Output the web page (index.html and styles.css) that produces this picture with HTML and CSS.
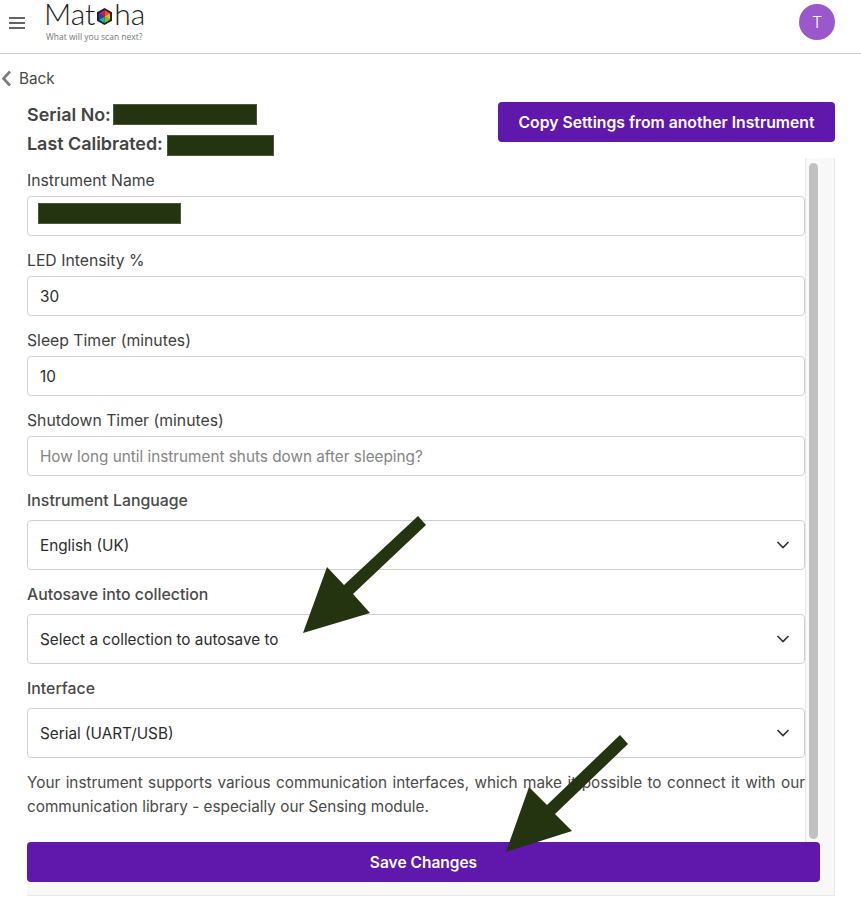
FILE: index.html
```html
<!DOCTYPE html>
<html lang="en">
<head>
<meta charset="utf-8">
<title>Matoha instrument settings</title>
<link rel="stylesheet" href="styles.css">
</head>
<body>
<header class="topbar">
  <button class="menu" aria-label="Menu">
    <svg width="16" height="12" viewBox="0 0 16 12"><path d="M0 1h16M0 6h16M0 11h16" stroke="#333" stroke-width="1.6"/></svg>
  </button>
  <div class="logo">
    <div class="logo-word">Mat<svg class="hex" width="15" height="17" viewBox="0 0 30 34"><path d="M15 0L30 8.500V25.500L15 34L0 25.500V8.500z" fill="#222"/><path d="M15 17V4L26 10.500z" fill="#f0502a"/><path d="M15 17L26 10.500V23.500z" fill="#f5b90a"/><path d="M15 17L26 23.500L15 30z" fill="#7ac52a"/><path d="M15 17V30L4 23.500z" fill="#19b5a0"/><path d="M15 17L4 23.500V10.500z" fill="#2a3fc4"/><path d="M15 17L4 10.500L15 4z" fill="#c2187f"/></svg>ha</div>
    <div class="logo-tag">What will you scan next?</div>
  </div>
  <div class="avatar">T</div>
</header>
<main class="page">
  <a class="back"><svg width="11" height="17" viewBox="0 0 11 17"><path d="M9 1.500L2.500 8.500L9 15.500" fill="none" stroke="#7a7a7a" stroke-width="2.600"/></svg><span>Back</span></a>
  <div class="summary">
    <div class="meta">
      <div class="meta-row"><span>Serial No:</span><span class="redact redact-a"></span></div>
      <div class="meta-row"><span>Last Calibrated:</span><span class="redact redact-b"></span></div>
    </div>
    <button class="btn btn-copy">Copy Settings from another Instrument</button>
  </div>
  <section class="panel">
    <div class="scroll">
      <div class="fields">
        <label class="lbl">Instrument Name</label>
        <div class="input"><span class="redact redact-c"></span></div>
        <label class="lbl">LED Intensity %</label>
        <div class="input">30</div>
        <label class="lbl">Sleep Timer (minutes)</label>
        <div class="input">10</div>
        <label class="lbl">Shutdown Timer (minutes)</label>
        <div class="input placeholder">How long until instrument shuts down after sleeping?</div>
        <label class="lbl lbl-strong">Instrument Language</label>
        <div class="select">English (UK)<svg width="14" height="8" viewBox="0 0 14 8"><path d="M1.500 1L7 6.500L12.500 1" fill="none" stroke="#333" stroke-width="1.700"/></svg></div>
        <label class="lbl lbl-strong">Autosave into collection</label>
        <div class="select">Select a collection to autosave to<svg width="14" height="8" viewBox="0 0 14 8"><path d="M1.500 1L7 6.500L12.500 1" fill="none" stroke="#333" stroke-width="1.700"/></svg></div>
        <label class="lbl lbl-strong">Interface</label>
        <div class="select">Serial (UART/USB)<svg width="14" height="8" viewBox="0 0 14 8"><path d="M1.500 1L7 6.500L12.500 1" fill="none" stroke="#333" stroke-width="1.700"/></svg></div>
        <p class="help">Your instrument supports various communication interfaces, which make it possible to connect it with our communication library - especially our Sensing module.</p>
      </div>
      <div class="scrollbar"><div class="thumb"></div></div>
    </div>
    <button class="btn btn-save">Save Changes</button>
  </section>
</main>
<svg class="arrows" width="861" height="908" viewBox="0 0 861 908">
  <path fill="#243410" d="M418 516L426 525L353 594L370 613L303 633L327 567L344 585z"/>
  <path fill="#243410" d="M620 735L628 744L555 814L572 831L506 852L529 787L547 805z"/>
</svg>
</body>
</html>
```
FILE: styles.css
```css
* { box-sizing: border-box; }
html, body { margin: 0; padding: 0; }
body {
  position: relative;
  width: 861px;
  height: 908px;
  overflow: hidden;
  background: #fff;
  color: #4a4a4a;
  font-family: Inter, "Liberation Sans", sans-serif;
  font-size: 15.3px;
}
.topbar {
  display: flex;
  align-items: flex-start;
  height: 54px;
  padding: 0 26px 0 9px;
  border-bottom: 1px solid #cfcfcf;
}
.menu {
  display: flex;
  margin: 17px 19px 0 0;
  padding: 0;
  border: 0;
  background: none;
}
.logo { flex: 1; }
.logo-word {
  display: flex;
  align-items: flex-end;
  height: 27px;
  color: #222;
  font-family: Lato, sans-serif;
  font-size: 30px;
  font-weight: 300;
  line-height: 27px;
}
.hex { margin: 0 2px 2px 2px; }
.logo-tag {
  margin-top: 4px;
  padding-left: 2px;
  color: #777;
  font-family: "Open Sans", sans-serif;
  font-size: 8.500px;
  line-height: 11px;
}
.avatar {
  display: flex;
  align-items: center;
  justify-content: center;
  width: 36px;
  height: 36px;
  margin-top: 4px;
  border-radius: 50%;
  background: #9a58cc;
  color: #fff;
  font-size: 16px;
  font-weight: 300;
}
.page { padding: 12px 26px 0 27px; }
.back {
  display: flex;
  align-items: center;
  gap: 7px;
  height: 24px;
  margin-left: -26px;
  color: #4a4a4a;
}
.summary {
  display: flex;
  justify-content: space-between;
  height: 58px;
  margin-top: 10px;
}
.meta {
  color: #444;
  font-size: 17.900px;
  font-weight: 600;
}
.meta-row {
  display: flex;
  align-items: center;
  gap: 3px;
  height: 29px;
}
.redact {
  display: block;
  height: 21px;
  border: 1px solid #4b5a3a;
  background: #243410;
}
.redact-a { width: 144px; margin-left: -1px; }
.redact-b { width: 107px; margin: 4px 0 0 1px; }
.redact-c { width: 143px; }
.btn {
  border: 0;
  border-radius: 4px;
  background: #6017ab;
  color: #fff;
  font-family: inherit;
  font-weight: 600;
}
.btn-copy { width: 337px; height: 40px; margin-top: 2px; font-size: 15.750px; }
.panel {
  height: 738px;
  padding: 0 14px 13px 0;
  border-right: 1px solid #e8e8e8;
  border-bottom: 1px solid #e8e8e8;
  background: #f8f8f8;
}
.scroll {
  display: flex;
  height: 684px;
  background: #fff;
}
.fields {
  flex: 1;
  padding-top: 10px;
}
.lbl {
  display: block;
  margin: 13px 0 3px;
  color: #404040;
  font-size: 15.750px;
  line-height: 24px;
}
.fields .lbl:first-child { margin-top: 1px; }
.lbl-strong { color: #4a4a4a; font-size: 15.850px; font-weight: 500; margin-bottom: 7px; }
.input, .select {
  display: flex;
  align-items: center;
  padding: 0 14px 0 12px;
  border: 1px solid #d0d0d0;
  border-radius: 4px;
  background: #fff;
  color: #2c2c2c;
}
.input { height: 40px; }
.select { justify-content: space-between; height: 50px; }
.input .redact { margin-left: -2px; margin-top: -5px; }
.placeholder { color: #858585; }
.help {
  margin: 13px 0 0;
  color: #4a4a4a;
  line-height: 24px;
  text-align: justify;
}
.scrollbar {
  width: 15px;
  flex: none;
  padding: 5px 2px 3px 3px;
  border-left: 1px solid #e8e8e8;
  background: #fafafa;
}
.thumb {
  height: 100%;
  border-radius: 5px;
  background: #c1c1c1;
}
.btn-save {
  display: block;
  width: 100%;
  height: 40px;
  font-size: 15.500px;
}
.arrows {
  position: absolute;
  left: 0;
  top: 0;
  pointer-events: none;
}
```
